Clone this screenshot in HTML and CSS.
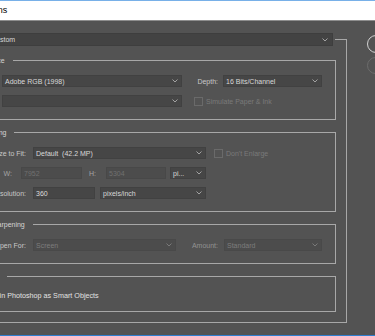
FILE: index.html
```html
<!DOCTYPE html>
<html lang="en">

<head>
    <meta charset="utf-8">
    <meta name="viewport" content="width=device-width, initial-scale=1.0">
    <title>Workflow Options</title>
    <link rel="stylesheet" href="styles.css">
</head>

<body>
    <div class="window">
        <header class="titlebar">
            <span class="title">Workflow Options</span>
        </header>

        <main class="dialog">
            <fieldset class="frame">
                <legend class="preset">
                    <span class="lbl preset-lbl">Preset:</span>
                    <div class="sel preset-sel">
                        <span>Custom</span>
                        <svg class="chev" width="6" height="4" viewBox="0 0 6 4"><path d="M0.5 0.5 L3 3 L5.5 0.5" /></svg>
                    </div>
                </legend>

                <fieldset class="group">
                    <legend>Color Space</legend>
                    <div class="row">
                        <span class="lbl col-cs">Space:</span>
                        <div class="sel w180">
                            <span>Adobe RGB (1998)</span>
                            <svg class="chev" width="6" height="4" viewBox="0 0 6 4"><path d="M0.5 0.5 L3 3 L5.5 0.5" /></svg>
                        </div>
                        <span class="lbl depth-lbl">Depth:</span>
                        <div class="sel w99">
                            <span>16 Bits/Channel</span>
                            <svg class="chev" width="6" height="4" viewBox="0 0 6 4"><path d="M0.5 0.5 L3 3 L5.5 0.5" /></svg>
                        </div>
                    </div>
                    <div class="row">
                        <span class="lbl col-cs">Intent:</span>
                        <div class="sel w180">
                            <span></span>
                            <svg class="chev" width="6" height="4" viewBox="0 0 6 4"><path d="M0.5 0.5 L3 3 L5.5 0.5" /></svg>
                        </div>
                        <label class="check off simulate">
                            <span class="box"></span>
                            <span>Simulate Paper &amp; Ink</span>
                        </label>
                    </div>
                </fieldset>

                <fieldset class="group">
                    <legend>Image Sizing</legend>
                    <div class="row">
                        <span class="lbl col-is">Resize to Fit:</span>
                        <div class="sel w173">
                            <span>Default&nbsp; (42.2 MP)</span>
                            <svg class="chev" width="6" height="4" viewBox="0 0 6 4"><path d="M0.5 0.5 L3 3 L5.5 0.5" /></svg>
                        </div>
                        <label class="check off enlarge">
                            <span class="box"></span>
                            <span>Don't Enlarge</span>
                        </label>
                    </div>
                    <div class="row">
                        <span class="lbl dim w-lbl">W:</span>
                        <div class="field off w61">7952</div>
                        <span class="lbl dim h-lbl">H:</span>
                        <div class="field off w60">5304</div>
                        <div class="sel w36 unit">
                            <span>pi...</span>
                            <svg class="chev" width="6" height="4" viewBox="0 0 6 4"><path d="M0.5 0.5 L3 3 L5.5 0.5" /></svg>
                        </div>
                    </div>
                    <div class="row">
                        <span class="lbl col-is">Resolution:</span>
                        <div class="field w62">360</div>
                        <div class="sel w106 unit">
                            <span>pixels/inch</span>
                            <svg class="chev" width="6" height="4" viewBox="0 0 6 4"><path d="M0.5 0.5 L3 3 L5.5 0.5" /></svg>
                        </div>
                    </div>
                </fieldset>

                <fieldset class="group">
                    <legend>Output Sharpening</legend>
                    <div class="row">
                        <span class="lbl col-is">Sharpen For:</span>
                        <div class="sel off w143">
                            <span>Screen</span>
                            <svg class="chev" width="6" height="4" viewBox="0 0 6 4"><path d="M0.5 0.5 L3 3 L5.5 0.5" /></svg>
                        </div>
                        <span class="lbl dim amount-lbl">Amount:</span>
                        <div class="sel off w98">
                            <span>Standard</span>
                            <svg class="chev" width="6" height="4" viewBox="0 0 6 4"><path d="M0.5 0.5 L3 3 L5.5 0.5" /></svg>
                        </div>
                    </div>
                </fieldset>

                <fieldset class="group last">
                    <legend>Photoshop</legend>
                    <div class="row">
                        <label class="check smart">
                            <span class="box"></span>
                            <span>Open in Photoshop as Smart Objects</span>
                        </label>
                    </div>
                </fieldset>
            </fieldset>

            <div class="buttons">
                <button class="btn ok">OK</button>
                <button class="btn cancel">Cancel</button>
            </div>
        </main>
    </div>
</body>

</html>
```

FILE: styles.css
```css
*,
body * {
    box-sizing: border-box;
}

body {
    margin: 0;
    padding: 0;
    overflow: hidden;
    background-color: #535353;
    font-family: "Liberation Sans", Arial, sans-serif;
    font-size: 7px;
    color: #c8c8c8;
}

.window {
    height: 336px;
    overflow: hidden;
    border-bottom: 1px solid #2f7ed0;
}

.titlebar {
    height: 21px;
    background-color: #fff;
    border-top: 1px solid #78b0e8;
    border-bottom: 1px solid #8e8e8e;
    color: #000;
    font-size: 9px;
    line-height: 19px;
    white-space: nowrap;
}

.title {
    display: inline-block;
    margin-left: -63px;
}

.dialog {
    display: flex;
    align-items: flex-start;
    gap: 20px;
    margin-left: -70px;
    padding-top: 12px;
}

/* frames */

.frame {
    flex: none;
    width: 417px;
    margin: 0;
    padding: 0 0 10px 0;
    border: 1px solid #a8a8a8;
}

.preset {
    display: flex;
    align-items: center;
    height: 13px;
    padding: 0 2px 0 12px;
}

.group {
    margin: 7px 10px 0 10px;
    padding: 9px 0 12px 0;
    border: 1px solid #a8a8a8;
}

.preset + .group {
    margin-top: 9px;
}

.group legend {
    padding: 0 8px 0 24px;
    line-height: 11px;
    color: #d4d4d4;
}

.group.last {
    padding: 7px 0 10px 0;
}

/* rows */

.row {
    display: flex;
    align-items: center;
    height: 12px;
}

.row + .row {
    margin-top: 8px;
}

.lbl {
    flex: none;
    text-align: right;
    white-space: nowrap;
}

.dim {
    color: #a4a4a4;
}

.preset-lbl {
    width: 40px;
    margin-right: 4px;
}

.col-cs {
    width: 56px;
    margin-right: 4px;
}

.depth-lbl {
    width: 26px;
    margin: 0 5px 0 10px;
}

.col-is {
    width: 84px;
    margin-right: 7px;
}

.w-lbl {
    width: 70px;
    margin-right: 9px;
}

.h-lbl {
    width: 9px;
    margin: 0 10px 0 5px;
}

.amount-lbl {
    width: 30px;
    margin: 0 6px 0 12px;
    color: #929292;
}

/* dropdowns and fields */

.sel {
    flex: none;
    display: flex;
    align-items: center;
    justify-content: space-between;
    height: 12px;
    padding: 0 3px 0 2px;
    background-color: #464646;
    border: 1px solid #414141;
    color: #d8d8d8;
    white-space: nowrap;
}

.sel.off {
    background-color: #4c4c4c;
    border-color: #494949;
    color: #7c7c7c;
}

.chev {
    flex: none;
    fill: none;
    stroke: #a2a2a2;
    stroke-width: 1;
}

.sel.off .chev {
    stroke: #797979;
}

.preset-sel {
    width: 346px;
    height: 13px;
    padding: 0 4px 0 3px;
    background-color: #434343;
    border-color: #3e3e3e;
}

.field {
    flex: none;
    display: flex;
    align-items: center;
    height: 12px;
    padding: 0 2px;
    background-color: #464646;
    border: 1px solid #414141;
    color: #dcdcdc;
}

.field.off {
    background-color: #4c4c4c;
    border-color: #484848;
    color: #707070;
}

.unit {
    margin-left: 5px;
}

.w36 {
    width: 36px;
    margin-left: 4px;
}

.w60 {
    width: 60px;
}

.w61 {
    width: 61px;
}

.w62 {
    width: 62px;
}

.w98 {
    width: 98px;
}

.w99 {
    width: 99px;
}

.w106 {
    width: 106px;
}

.w143 {
    width: 143px;
}

.w173 {
    width: 173px;
}

.w180 {
    width: 180px;
}

/* checkboxes */

.check {
    display: flex;
    align-items: center;
    gap: 3px;
    white-space: nowrap;
    color: #e2e2e2;
}

.check .box {
    width: 9px;
    height: 9px;
    border: 1px solid #9a9a9a;
    background-color: #4e4e4e;
}

.check.off {
    color: #7a7a7a;
}

.check.off .box {
    border-color: #6a6a6a;
    background-color: transparent;
}

.simulate {
    margin-left: 12px;
}

.enlarge {
    margin-left: 8px;
}

.smart {
    margin-left: 25px;
    gap: 4px;
    font-size: 7.2px;
}

/* buttons */

.buttons {
    flex: none;
    display: flex;
    flex-direction: column;
    gap: 4px;
    margin-top: 2px;
}

.btn {
    width: 70px;
    height: 18px;
    padding: 0;
    border: 1px solid #d2d2d2;
    border-radius: 9px;
    background-color: transparent;
    color: #e0e0e0;
    font-family: "Liberation Sans", Arial, sans-serif;
    font-size: 7px;
}

.btn.cancel {
    height: 17px;
    border-color: #6c6c6c;
}
```
